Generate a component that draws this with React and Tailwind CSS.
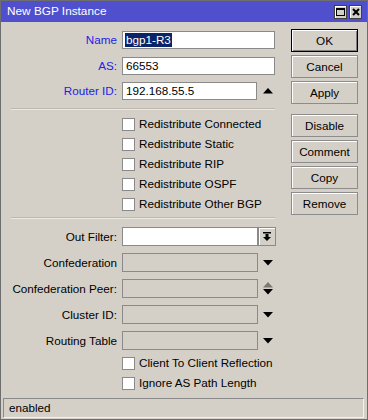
import React from 'react';

const labelCls = 'w-[116px] shrink-0 text-right whitespace-nowrap';

function TriDown({ color = '#000' }) {
  return (
    <svg width="10" height="6" viewBox="0 0 10 6">
      <polygon points="0,0 10,0 5,5.5" fill={color} />
    </svg>
  );
}

function TriUp({ color = '#000' }) {
  return (
    <svg width="10" height="6" viewBox="0 0 10 6">
      <polygon points="0,5.5 10,5.5 5,0" fill={color} />
    </svg>
  );
}

function Check({ label }) {
  return (
    <div className="flex items-center h-[20px] ml-[121px]">
      <div className="w-[13px] h-[13px] bg-white border border-[#8a8a8a] shrink-0" />
      <span className="ml-[4px] whitespace-nowrap">{label}</span>
    </div>
  );
}

function Btn({ children, primary }) {
  return (
    <div
      className={`h-[23px] flex items-center justify-center bg-[#d4d0c8] ${
        primary
          ? 'border border-black shadow-[inset_1px_1px_0_#fff,inset_-1px_-1px_0_#808080]'
          : 'border border-[#8c8c8c] shadow-[inset_1px_1px_0_#fff]'
      }`}
    >
      {children}
    </div>
  );
}

function Box({ w, disabled, children }) {
  return (
    <div
      className={`h-[19px] shrink-0 border border-[#8a8a8a] flex items-center pl-[2px] ${
        disabled ? 'bg-[#d4d0c8]' : 'bg-white'
      }`}
      style={{ width: w }}
    >
      {children}
    </div>
  );
}

function Sep({ mt }) {
  return <div className={`${mt} ml-[10px] w-[264px] h-[2px] border-t border-[#bcb8b0] border-b border-b-[#ebe9e4]`} />;
}

export default function App() {
  return (
    <div className="w-[368px] h-[420px] bg-[#d4d0c8] border border-[#6e6e6e] flex flex-col text-[11.7px] text-black font-['Liberation_Sans',Arial,sans-serif] overflow-hidden">
      {/* title bar */}
      <div className="h-[21px] bg-[#5050cf] flex items-center pl-[6px] pr-[5px] shrink-0">
        <span className="text-white text-[11.8px] leading-none">New BGP Instance</span>
        <div className="ml-auto flex gap-[2px]">
          <div className="w-[13px] h-[14px] bg-[#d4d0c8] border border-[#404040] shadow-[inset_1px_1px_0_#fff] flex items-center justify-center">
            <div className="w-[9px] h-[8px] border border-black border-t-2" />
          </div>
          <div className="w-[13px] h-[14px] bg-[#d4d0c8] border border-[#404040] shadow-[inset_1px_1px_0_#fff] flex items-center justify-center">
            <svg width="8" height="8" viewBox="0 0 8 8">
              <path d="M1 1 L7 7 M7 1 L1 7" stroke="#000" strokeWidth="2" />
            </svg>
          </div>
        </div>
      </div>

      <div className="flex flex-1">
        {/* left form */}
        <div className="w-[290px] flex flex-col pt-[9px]">
          <div className="flex items-center h-[18px]">
            <span className={`${labelCls} text-[#2222e6]`}>Name</span>
            <div className="ml-[5px] w-[153px] h-[18px] bg-white border border-[#8a8a8a] flex items-center pl-[2px]">
              <span className="bg-[#0a246a] text-white px-[1px] leading-[14px]">bgp1-R3</span>
            </div>
          </div>
          <div className="flex items-center h-[18px] mt-[8px]">
            <span className={`${labelCls} text-[#2222e6]`}>AS:</span>
            <div className="ml-[5px] w-[153px] h-[18px] bg-white border border-[#8a8a8a] flex items-center pl-[3px]">
              66553
            </div>
          </div>
          <div className="flex items-center h-[18px] mt-[7px]">
            <span className={`${labelCls} text-[#2222e6]`}>Router ID:</span>
            <div className="ml-[5px] w-[135px] h-[18px] bg-white border border-[#8a8a8a] flex items-center pl-[3px]">
              192.168.55.5
            </div>
            <div className="ml-[6px] flex">
              <TriUp />
            </div>
          </div>

          <Sep mt="mt-[8px]" />

          <div className="mt-[4px] flex flex-col">
            <Check label="Redistribute Connected" />
            <Check label="Redistribute Static" />
            <Check label="Redistribute RIP" />
            <Check label="Redistribute OSPF" />
            <Check label="Redistribute Other BGP" />
          </div>

          <Sep mt="mt-[3px]" />

          <div className="mt-[8px] flex flex-col gap-[7px]">
            <div className="flex items-center h-[19px]">
              <span className={labelCls}>Out Filter:</span>
              <div className="ml-[5px] flex">
                <Box w={136} />
                <div className="w-[18px] h-[19px] border border-[#8a8a8a] shadow-[inset_1px_1px_0_#fff] flex items-center justify-center">
                  <svg width="8" height="9" viewBox="0 0 8 9">
                    <rect x="0" y="0" width="8" height="1.5" fill="#000" />
                    <rect x="2.5" y="2" width="3" height="3" fill="#000" />
                    <polygon points="0,5 8,5 4,9" fill="#000" />
                  </svg>
                </div>
              </div>
            </div>
            <div className="flex items-center h-[19px]">
              <span className={labelCls}>Confederation</span>
              <div className="ml-[5px]">
                <Box w={136} disabled />
              </div>
              <div className="ml-[5px] flex">
                <TriDown />
              </div>
            </div>
            <div className="flex items-center h-[19px]">
              <span className={labelCls}>Confederation Peer:</span>
              <div className="ml-[5px]">
                <Box w={136} disabled />
              </div>
              <div className="ml-[5px] flex flex-col gap-[1px]">
                <TriUp color="#7a7a72" />
                <TriDown />
              </div>
            </div>
            <div className="flex items-center h-[19px]">
              <span className={labelCls}>Cluster ID:</span>
              <div className="ml-[5px]">
                <Box w={136} disabled />
              </div>
              <div className="ml-[5px] flex">
                <TriDown />
              </div>
            </div>
            <div className="flex items-center h-[19px]">
              <span className={labelCls}>Routing Table</span>
              <div className="ml-[5px]">
                <Box w={136} disabled />
              </div>
              <div className="ml-[5px] flex">
                <TriDown />
              </div>
            </div>
          </div>

          <div className="mt-[3px] flex flex-col">
            <Check label="Client To Client Reflection" />
            <Check label="Ignore AS Path Length" />
          </div>
        </div>

        {/* right buttons */}
        <div className="w-[67px] flex flex-col pt-[7px]">
          <div className="flex flex-col gap-[3px]">
            <Btn primary>OK</Btn>
            <Btn>Cancel</Btn>
            <Btn>Apply</Btn>
          </div>
          <div className="flex flex-col gap-[3px] mt-[10px]">
            <Btn>Disable</Btn>
            <Btn>Comment</Btn>
            <Btn>Copy</Btn>
            <Btn>Remove</Btn>
          </div>
        </div>
      </div>

      {/* status bar */}
      <div className="h-[20px] ml-[2px] mr-[3px] mb-[1px] border border-t-[#8a8a8a] border-l-[#8a8a8a] border-b-[#f4f2ee] border-r-[#f4f2ee] flex items-center pl-[5px] shrink-0">
        enabled
      </div>
    </div>
  );
}
